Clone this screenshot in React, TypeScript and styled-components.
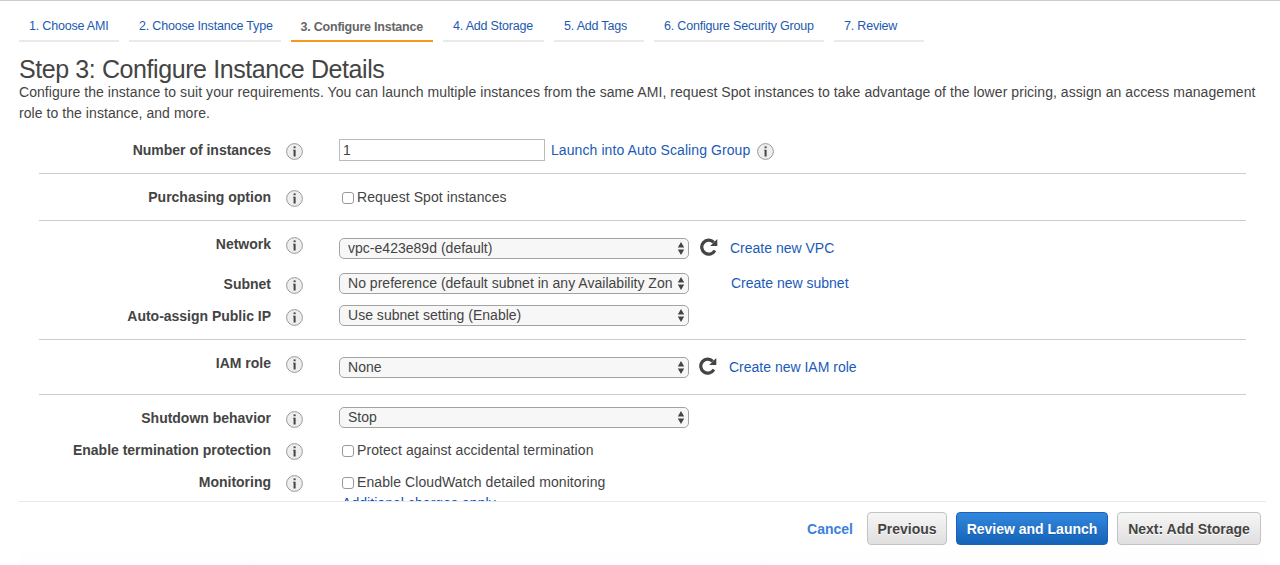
import React from "react";
import styled, { createGlobalStyle } from "styled-components";

const GlobalStyle = createGlobalStyle`
  * { box-sizing: border-box; }
  body {
    margin: 0;
    background: #fff;
    color: #444;
    font: 14px/21px "Liberation Sans", Arial, sans-serif;
    overflow: hidden;
  }
`;

const Page = styled.div`
  width: 1280px;
  height: 565px;
  display: flex;
  flex-direction: column;
  border-top: 1px solid #ccc;
`;

const Content = styled.main`
  height: 500px;
  flex: none;
  overflow: hidden;
`;

const Tabs = styled.nav`
  display: flex;
  gap: 10px;
  padding: 11px 0 0 19px;
`;

const Tab = styled.a<{ $width: number; $active?: boolean }>`
  width: ${(p) => p.$width}px;
  height: 30px;
  padding: ${(p) => (p.$active ? 5 : 4)}px 0 0 ${(p) => (p.$active ? 9.5 : 10)}px;
  border-bottom: 2px solid ${(p) => (p.$active ? "#f7981d" : "#eaeaea")};
  color: ${(p) => (p.$active ? "#666" : "#1c5ab0")};
  font-size: 12.5px;
  font-weight: ${(p) => (p.$active ? 700 : 400)};
  line-height: 20px;
  letter-spacing: ${(p) => (p.$active ? -0.22 : -0.19)}px;
  white-space: nowrap;
`;

const Title = styled.h1`
  margin: 13px 0 0 19px;
  font-size: 25px;
  font-weight: 400;
  line-height: 28px;
  letter-spacing: -0.41px;
  white-space: nowrap;
`;

const Intro = styled.p`
  margin: -1px 0 0 19px;
  letter-spacing: 0.06px;
  white-space: nowrap;
`;

const Form = styled.form`
  margin: 3px 34px 0 39px;
`;

const Group = styled.section`
  padding-top: 12px;
  border-bottom: 1px solid #ccc;
`;

const Row = styled.div<{ $height?: number }>`
  display: grid;
  grid-template-columns: 232px 68px 1fr;
  align-items: start;
  height: ${(p) => p.$height ?? 32}px;
`;

const Label = styled.label`
  padding-top: 1px;
  font-weight: 700;
  text-align: right;
  letter-spacing: -0.01px;
  white-space: nowrap;
`;

const InfoCell = styled.div<{ $left?: number }>`
  padding: 4px 0 0 ${(p) => p.$left ?? 15}px;
  height: 22px;
`;

const InfoSvg = styled.svg`
  display: block;
  flex: none;
`;

const Control = styled.div`
  display: flex;
  align-items: center;
  height: 22px;
  letter-spacing: 0.08px;
  white-space: nowrap;
`;

const SelectLine = styled.div<{ $offset?: number }>`
  display: flex;
  align-items: center;
  height: 21px;
  margin-top: ${(p) => p.$offset ?? 0}px;
`;

const NumberInput = styled.input`
  width: 206px;
  height: 22px;
  margin-right: 6px;
  padding: 0 3px;
  border: 1px solid #bbb;
  background: #fff;
  color: #444;
  font: inherit;
`;

const SelectBox = styled.button`
  display: flex;
  justify-content: space-between;
  align-items: center;
  width: 350px;
  height: 21px;
  flex: none;
  padding: 0 3px 0 8px;
  border: 1px solid #a3a3a3;
  border-radius: 5px;
  background: #f7f7f7;
  color: #444;
  font: inherit;
  line-height: 18px;
  text-align: left;
  white-space: nowrap;
`;

const SelectText = styled.span`
  width: 326px;
  padding-bottom: 1px;
  letter-spacing: 0.02px;
  overflow: hidden;
`;

const Reload = styled.span<{ $left: number }>`
  display: flex;
  margin-left: ${(p) => p.$left}px;
  padding-bottom: 3px;
`;

const Link = styled.a<{ $left?: number }>`
  margin-left: ${(p) => p.$left ?? 0}px;
  color: #1a5bb8;
  white-space: nowrap;
`;

const Checkbox = styled.input`
  appearance: none;
  width: 12px;
  height: 12px;
  margin: 2px 3px 0 3px;
  border: 1px solid #999;
  border-radius: 3px;
  background: #fff;
`;

const ChargesLink = styled.a`
  display: block;
  padding-left: 3px;
  line-height: 20px;
  letter-spacing: 0.05px;
  color: #0a4fc0;
`;

const Footer = styled.footer`
  display: flex;
  flex: 1;
  justify-content: flex-end;
  align-items: flex-start;
  margin: 0 14px 0 19px;
  padding: 10px 5px 0 0;
  border-top: 1px solid #e8e8e8;
  background: linear-gradient(#fff 48px, #fdfdfd);
`;

const Actions = styled.div`
  display: flex;
  gap: 9px;
`;

const Cancel = styled.a`
  margin-right: 5px;
  color: #3c7fdc;
  font-weight: 700;
  line-height: 34px;
`;

const Button = styled.button<{ $width: number; $primary?: boolean }>`
  width: ${(p) => p.$width}px;
  height: 33px;
  padding: 1px 0 0;
  border: 1px solid ${(p) => (p.$primary ? "#1a62b5" : "#c3c3c3")};
  border-radius: 4px;
  background: ${(p) => (p.$primary ? "linear-gradient(#3287dc, #1463b9)" : "linear-gradient(#f6f6f6, #dfdfdf)")};
  color: ${(p) => (p.$primary ? "#fff" : "#444")};
  font: 700 14px/20px "Liberation Sans", Arial, sans-serif;
  text-shadow: ${(p) => (p.$primary ? "0 1px 0 #1559a5" : "0 1px 0 #fff")};
  white-space: nowrap;
`;

const InfoIcon = () => (
  <InfoSvg width="17" height="17" viewBox="0 0 17 17">
    <circle cx="8.5" cy="8.5" r="7.9" fill="#eee" stroke="#999" />
    <rect x="7.6" y="3.4" width="2" height="1.8" fill="#444" />
    <path d="M7 6.7H9.6V13.6H7.6V7.5H7Z" fill="#444" />
  </InfoSvg>
);

const ReloadIcon = () => (
  <svg width="18" height="18" viewBox="0 0 18 18">
    <path d="M14.9 12.5A7 7 0 1 1 13.8 4.3" fill="none" stroke="#444" strokeWidth="3.2" />
    <path d="M17.3 1V8H10.2Z" fill="#444" />
  </svg>
);

const Arrows = () => (
  <svg width="8" height="13" viewBox="0 0 8 13">
    <path d="M4 0.1 7.2 5.4H0.8ZM4 12.9 0.8 7.6H7.2Z" fill="#444" />
  </svg>
);

const Select = ({ children }: { children: React.ReactNode }) => (
  <SelectBox type="button">
    <SelectText>{children}</SelectText>
    <Arrows />
  </SelectBox>
);

const Field = ({ label, height, children }: { label: string; height?: number; children: React.ReactNode }) => (
  <Row $height={height}>
    <Label>{label}</Label>
    <InfoCell>
      <InfoIcon />
    </InfoCell>
    {children}
  </Row>
);

const tabs = [
  { text: "1. Choose AMI", width: 100 },
  { text: "2. Choose Instance Type", width: 152 },
  { text: "3. Configure Instance", width: 142, active: true },
  { text: "4. Add Storage", width: 101 },
  { text: "5. Add Tags", width: 90 },
  { text: "6. Configure Security Group", width: 170 },
  { text: "7. Review", width: 90 },
];

export default function App() {
  return (
    <Page>
      <GlobalStyle />
      <Content>
        <Tabs>
          {tabs.map((t) => (
            <Tab key={t.text} $width={t.width} $active={t.active}>
              {t.text}
            </Tab>
          ))}
        </Tabs>
        <Title>Step 3: Configure Instance Details</Title>
        <Intro>
          Configure the instance to suit your requirements. You can launch multiple instances from the same AMI, request
          Spot instances to take advantage of the lower pricing, assign an access management
          <br />
          role to the instance, and more.
        </Intro>
        <Form>
          <Group>
            <Field label="Number of instances" height={34}>
              <Control>
                <NumberInput defaultValue="1" />
                <Link>Launch into Auto Scaling Group</Link>
                <InfoCell $left={7}>
                  <InfoIcon />
                </InfoCell>
              </Control>
            </Field>
          </Group>
          <Group>
            <Field label="Purchasing option" height={34}>
              <Control>
                <Checkbox type="checkbox" />
                Request Spot instances
              </Control>
            </Field>
          </Group>
          <Group>
            <Field label="Network" height={40}>
              <SelectLine $offset={5}>
                <Select>vpc-e423e89d (default)</Select>
                <Reload $left={11}>
                  <ReloadIcon />
                </Reload>
                <Link $left={12}>Create new VPC</Link>
              </SelectLine>
            </Field>
            <Field label="Subnet">
              <SelectLine>
                <Select>No preference (default subnet in any Availability Zon</Select>
                <Link $left={42}>Create new subnet</Link>
              </SelectLine>
            </Field>
            <Field label="Auto-assign Public IP" height={34}>
              <SelectLine>
                <Select>Use subnet setting (Enable)</Select>
              </SelectLine>
            </Field>
          </Group>
          <Group>
            <Field label="IAM role" height={42}>
              <SelectLine $offset={5}>
                <Select>None</Select>
                <Reload $left={10}>
                  <ReloadIcon />
                </Reload>
                <Link $left={12}>Create new IAM role</Link>
              </SelectLine>
            </Field>
          </Group>
          <Group>
            <Field label="Shutdown behavior">
              <SelectLine>
                <Select>Stop</Select>
              </SelectLine>
            </Field>
            <Field label="Enable termination protection">
              <Control>
                <Checkbox type="checkbox" />
                Protect against accidental termination
              </Control>
            </Field>
            <Field label="Monitoring">
              <div>
                <Control>
                  <Checkbox type="checkbox" />
                  Enable CloudWatch detailed monitoring
                </Control>
                <ChargesLink>Additional charges apply</ChargesLink>
              </div>
            </Field>
          </Group>
        </Form>
      </Content>
      <Footer>
        <Actions>
          <Cancel>Cancel</Cancel>
          <Button $width={80}>Previous</Button>
          <Button $width={152} $primary>
            Review and Launch
          </Button>
          <Button $width={144}>Next: Add Storage</Button>
        </Actions>
      </Footer>
    </Page>
  );
}
